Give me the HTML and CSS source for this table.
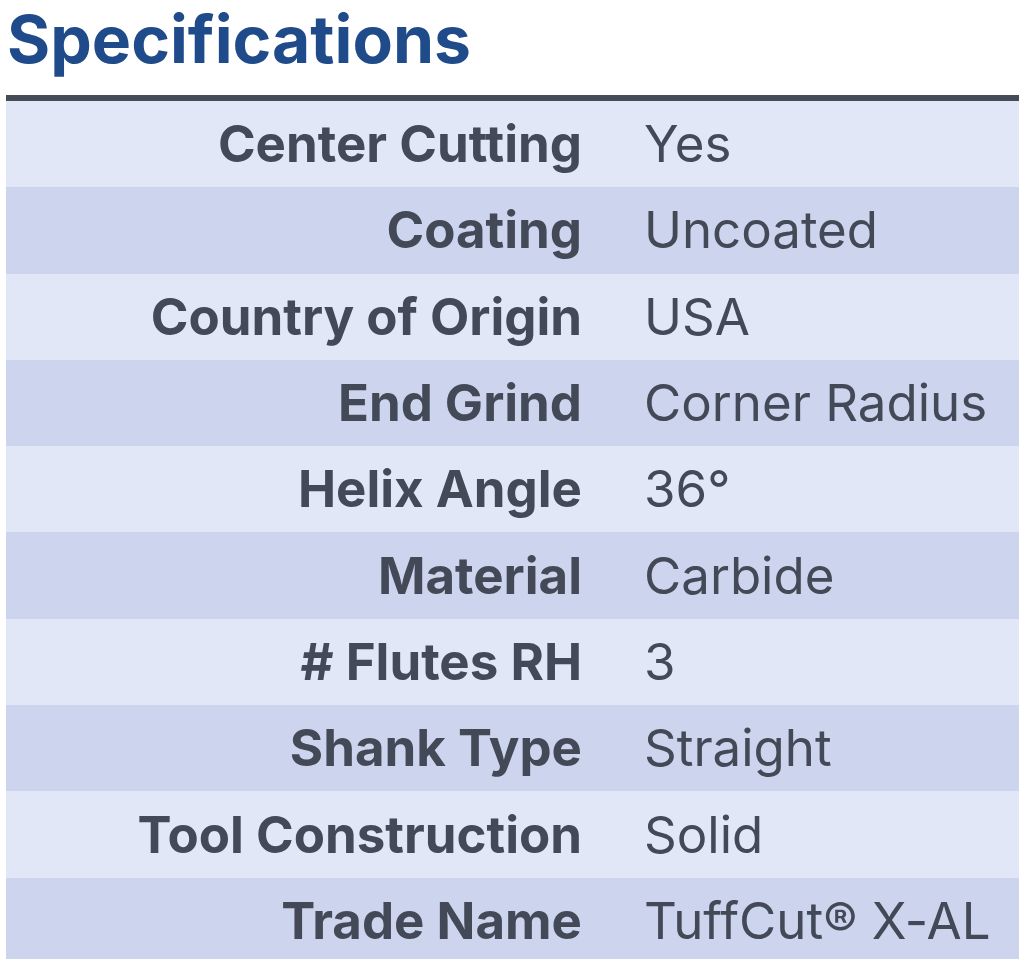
FILE: index.html
```html
<!DOCTYPE html>
<html>
<head>
<meta charset="utf-8">
<link rel="stylesheet" href="styles.css">
</head>
<body>
<h2 class="title">Specifications</h2>
<div class="specs">
  <div class="row"><div class="label">Center Cutting</div><div class="value">Yes</div></div>
  <div class="row"><div class="label">Coating</div><div class="value">Uncoated</div></div>
  <div class="row"><div class="label">Country of Origin</div><div class="value">USA</div></div>
  <div class="row"><div class="label">End Grind</div><div class="value">Corner Radius</div></div>
  <div class="row"><div class="label">Helix Angle</div><div class="value">36°</div></div>
  <div class="row"><div class="label">Material</div><div class="value">Carbide</div></div>
  <div class="row"><div class="label"># Flutes RH</div><div class="value">3</div></div>
  <div class="row"><div class="label">Shank Type</div><div class="value">Straight</div></div>
  <div class="row"><div class="label">Tool Construction</div><div class="value">Solid</div></div>
  <div class="row"><div class="label">Trade Name</div><div class="value">TuffCut® X-AL</div></div>
</div>
</body>
</html>
```
FILE: styles.css
```css
html, body {
  margin: 0;
  padding: 0;
  background: #ffffff;
}
body {
  padding: 0 5px 0 6px;
  font-family: "Inter", "Noto Sans", sans-serif;
  color: #434957;
  font-variant-ligatures: none;
}
.title {
  margin: 0;
  padding-left: 1px;
  height: 95px;
  font-size: 66px;
  line-height: 78px;
  font-weight: 700;
  color: #1f4b8a;
  letter-spacing: 0;
}
.specs {
  border-top: 6px solid #454a57;
}
.row {
  display: grid;
  grid-template-columns: 576px 1fr;
  height: 86.3px;
  align-items: center;
  background: #e1e7f7;
}
.row:nth-child(even) {
  background: #cdd4ee;
}
.label {
  text-align: right;
  font-weight: 700;
  font-size: 51px;
  line-height: 60px;
}
.value {
  padding-left: 62px;
  font-size: 51px;
  line-height: 60px;
  font-weight: 400;
}
```
